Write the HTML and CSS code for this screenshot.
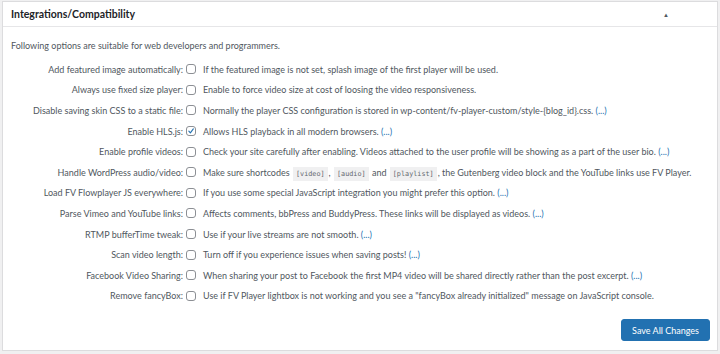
FILE: index.html
```html
<!DOCTYPE html>
<html>
<head>
<meta charset="utf-8">
<link rel="stylesheet" href="styles.css">
</head>
<body>
<div class="panel">
  <div class="panel-head">
    <h2 class="panel-title">Integrations/Compatibility</h2>
    <span class="toggle">&#9650;</span>
  </div>
  <div class="panel-body">
    <p class="intro">Following options are suitable for web developers and programmers.</p>
    <div class="opts">
      <label class="lbl">Add featured image automatically:</label><span class="cb"></span><span class="desc">If the featured image is not set, splash image of the first player will be used.</span>
      <label class="lbl">Always use fixed size player:</label><span class="cb"></span><span class="desc">Enable to force video size at cost of loosing the video responsiveness.</span>
      <label class="lbl">Disable saving skin CSS to a static file:</label><span class="cb"></span><span class="desc">Normally the player CSS configuration is stored in wp-content/fv-player-custom/style-{blog_id}.css. <a class="more">(...)</a></span>
      <label class="lbl">Enable HLS.js:</label><span class="cb checked"><svg viewBox="0 0 10 10" width="10" height="10"><path d="M2.3 5.2 L4.2 7.3 L7.9 2.4" fill="none" stroke="#2271b1" stroke-width="1.4" stroke-linecap="round" stroke-linejoin="round"/></svg></span><span class="desc">Allows HLS playback in all modern browsers. <a class="more">(...)</a></span>
      <label class="lbl">Enable profile videos:</label><span class="cb"></span><span class="desc">Check your site carefully after enabling. Videos attached to the user profile will be showing as a part of the user bio. <a class="more">(...)</a></span>
      <label class="lbl">Handle WordPress audio/video:</label><span class="cb"></span><span class="desc">Make sure shortcodes <code>[video]</code>, <code>[audio]</code> and <code>[playlist]</code>, the Gutenberg video block and the YouTube links use FV Player.</span>
      <label class="lbl">Load FV Flowplayer JS everywhere:</label><span class="cb"></span><span class="desc">If you use some special JavaScript integration you might prefer this option. <a class="more">(...)</a></span>
      <label class="lbl">Parse Vimeo and YouTube links:</label><span class="cb"></span><span class="desc">Affects comments, bbPress and BuddyPress. These links will be displayed as videos. <a class="more">(...)</a></span>
      <label class="lbl">RTMP bufferTime tweak:</label><span class="cb"></span><span class="desc">Use if your live streams are not smooth. <a class="more">(...)</a></span>
      <label class="lbl">Scan video length:</label><span class="cb"></span><span class="desc">Turn off if you experience issues when saving posts! <a class="more">(...)</a></span>
      <label class="lbl">Facebook Video Sharing:</label><span class="cb"></span><span class="desc">When sharing your post to Facebook the first MP4 video will be shared directly rather than the post excerpt. <a class="more">(...)</a></span>
      <label class="lbl">Remove fancyBox:</label><span class="cb"></span><span class="desc">Use if FV Player lightbox is not working and you see a "fancyBox already initialized" message on JavaScript console.</span>
    </div>
    <div class="actions">
      <button class="btn">Save All Changes</button>
    </div>
  </div>
</div>
</body>
</html>
```
FILE: styles.css
```css
html, body {
  margin: 0;
  padding: 0;
  background: #f0f0f1;
}
body {
  font-family: Lato, "Open Sans", sans-serif;
  font-size: 9px;
  color: #50575e;
}
.panel {
  margin: 1px 2px 1px 2px;
  background: #fff;
  border: 1px solid #dcdcde;
  height: 350px;
  box-sizing: border-box;
  display: flex;
  flex-direction: column;
}
.panel-head {
  height: 24px;
  border-bottom: 1px solid #e6e6e8;
  display: flex;
  align-items: center;
  justify-content: space-between;
  padding: 0 48px 0 8px;
}
.panel-title {
  margin: 0;
  font-size: 10.5px;
  font-weight: 700;
  color: #1d2327;
}
.toggle {
  font-size: 6px;
  color: #50575e;
}
.panel-body {
  flex: 1;
  display: flex;
  flex-direction: column;
  padding: 0 7px 9px 8px;
}
.intro {
  margin: 12px 0 6px 0;
  line-height: 14px;
}
.opts {
  display: grid;
  grid-template-columns: 172px 12px 1fr;
  grid-auto-rows: 20.6px;
  column-gap: 2px;
  align-items: center;
}
.lbl {
  text-align: right;
  white-space: nowrap;
}
.cb {
  width: 10px;
  height: 10px;
  border: 1px solid #8c8f94;
  border-radius: 3px;
  box-sizing: border-box;
  display: flex;
  align-items: center;
  justify-content: center;
  margin-left: 1px;
}
.cb svg {
  display: block;
}
.desc {
  padding-left: 4px;
  white-space: nowrap;
}
.more {
  color: #2271b1;
}
code {
  font-family: "DejaVu Sans Mono", monospace;
  font-size: 6.8px;
  background: #f0f0f1;
  padding: 3px 3px;
  margin: 0 1px;
  color: #646970;
}
.actions {
  margin-top: auto;
  display: flex;
  justify-content: flex-end;
}
.btn {
  font-family: Lato, "Open Sans", sans-serif;
  font-size: 9px;
  color: #fff;
  background: #2271b1;
  border: 1px solid #2271b1;
  border-radius: 3px;
  height: 22px;
  padding: 0 10px;
}
```
